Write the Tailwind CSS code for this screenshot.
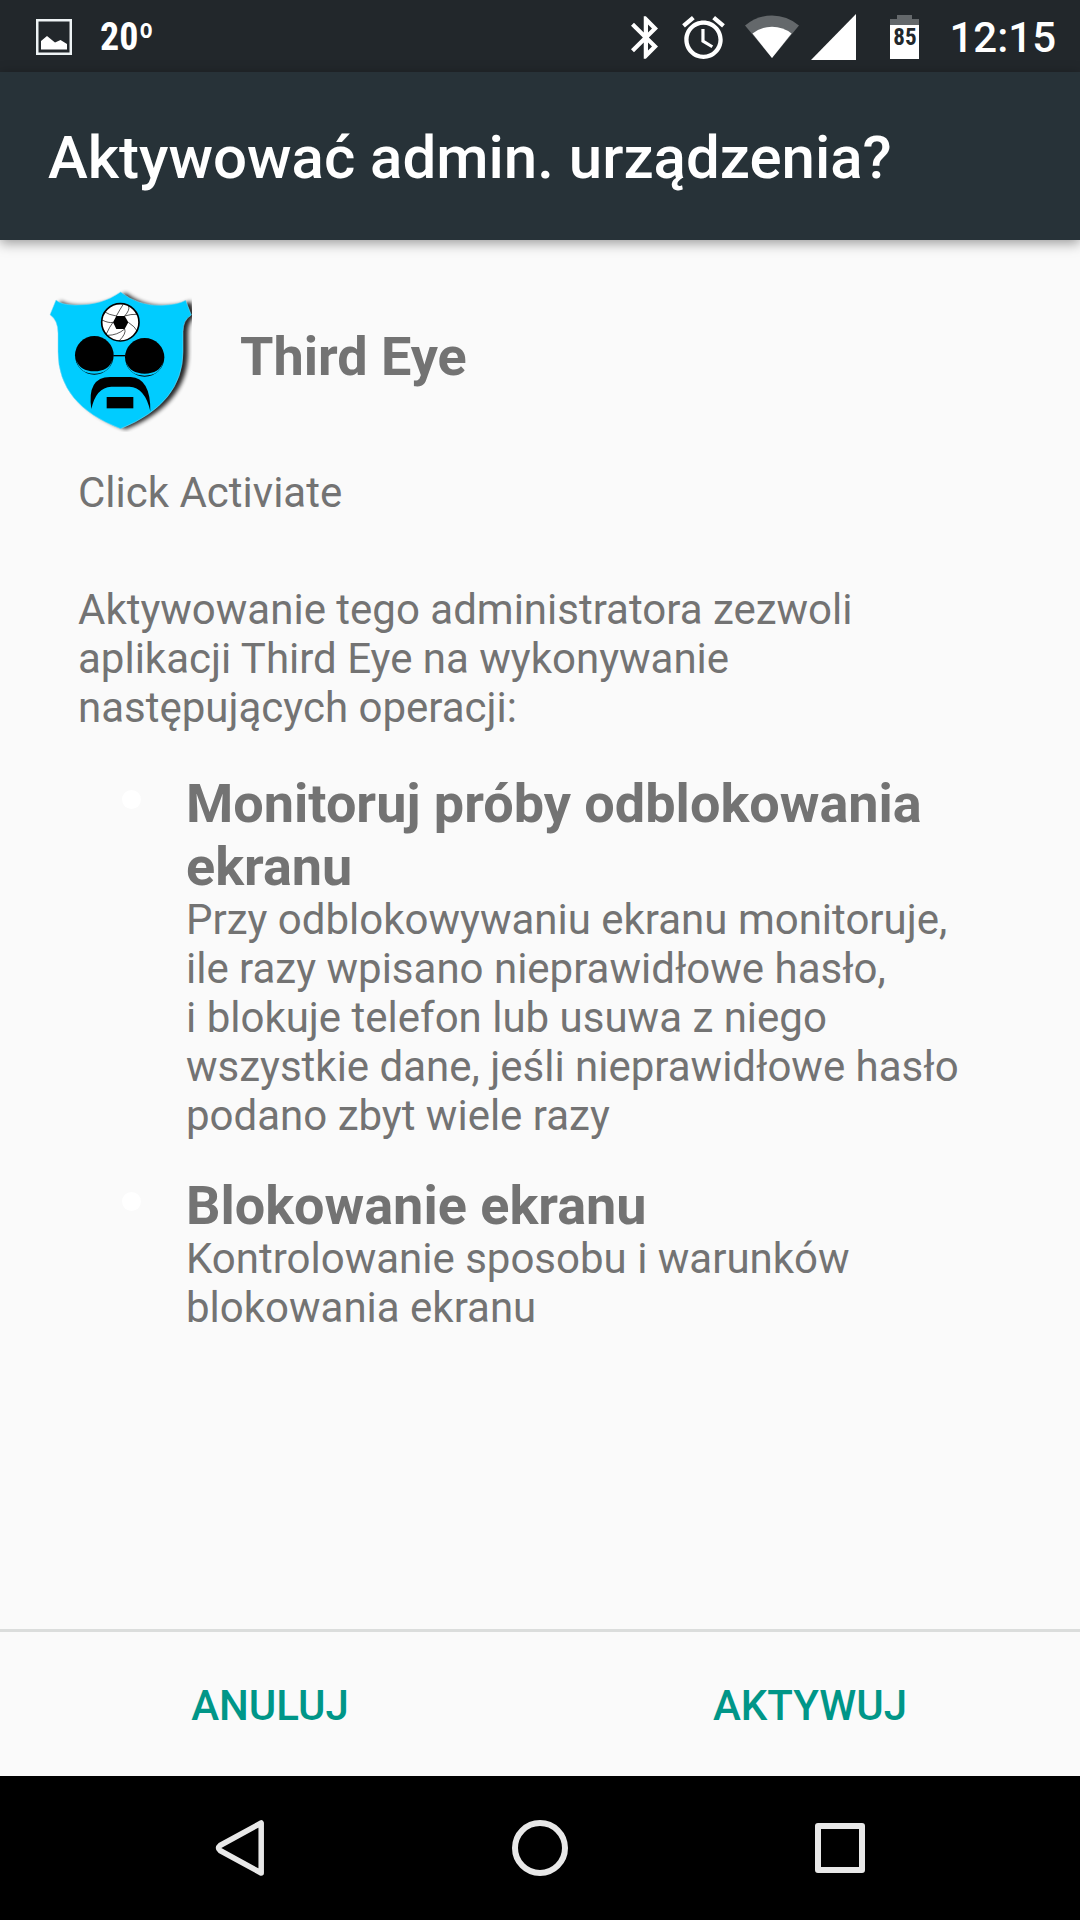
<!DOCTYPE html>
<html lang="pl">
  <head>
    <meta charset="UTF-8" />
    <meta name="viewport" content="width=device-width, initial-scale=1.0" />
    <title>Aktywować admin. urządzenia?</title>
    <script src="https://cdn.jsdelivr.net/npm/@tailwindcss/browser@4"></script>
  </head>

  <body class="min-h-screen flex flex-col bg-[#fafafa] text-[#737373] font-['Roboto',sans-serif] text-[42px] leading-[49px]">
    <!-- status bar -->
    <div class="h-18 shrink-0 flex items-center bg-[#22272b] text-white pt-0.5 pl-9 pr-6">
      <svg class="size-9" viewBox="0 0 36 36" fill="none">
        <rect x="1.25" y="1.25" width="33.5" height="33.5" stroke="#eef3f5" stroke-width="2.5" />
        <path d="M5 30.500V22l6-5 8 6.500 5.500-2.500 6.500 4v5.500z" fill="#fff" />
      </svg>
      <span class="ml-7 text-[38px] font-bold font-['Roboto_Condensed','Liberation_Sans_Narrow',sans-serif]">20º</span>

      <svg class="ml-auto w-[27px] h-[43px]" viewBox="5 2 12.71 20" fill="#fff">
        <path d="M17.71 7.71L12 2h-1v7.59L6.41 5 5 6.41 10.59 12 5 17.59 6.41 19 11 14.41V22h1l5.710-5.710-4.300-4.290 4.300-4.290zM13 5.830l1.880 1.880L13 9.590V5.830zm1.880 10.460L13 18.170v-3.760l1.880 1.880z" />
      </svg>
      <svg class="ml-6 size-[43px]" viewBox="2 1.860 20 20.140" fill="#fff">
        <path d="M22 5.720l-4.600-3.860-1.290 1.530 4.600 3.860L22 5.720zM7.880 3.390L6.600 1.860 2 5.710l1.290 1.530 4.590-3.850zM12.500 8H11v6l4.750 2.850.75-1.230-4-2.370V8zM12 4c-4.970 0-9 4.030-9 9s4.020 9 9 9c4.970 0 9-4.030 9-9s-4.030-9-9-9zm0 16c-3.870 0-7-3.130-7-7s3.130-7 7-7 7 3.130 7 7-3.130 7-7 7z" />
      </svg>
      <svg class="ml-5 w-[54px] h-[44px]" viewBox="0 0 54 44">
        <path d="M0 10.500Q12 0.500 27 0.500T54 10.500L27 43z" fill="#64686b" />
        <path d="M7.500 18.500Q16 11.800 27 11.800T46.500 18.500L27 43z" fill="#fff" />
      </svg>
      <svg class="ml-3 w-[45px] h-[46px]" viewBox="0 0 45 46"><path d="M0 46L45 0V46z" fill="#fff" /></svg>
      <div class="ml-[34px] grid place-items-center">
        <svg class="col-start-1 row-start-1 w-[29px] h-[44px]" viewBox="0 0 29 44">
          <path d="M0 10V4h7V0h15v4h7v6z" fill="#64686b" />
          <path d="M0 10h29v34H0z" fill="#fff" />
        </svg>
        <span class="col-start-1 row-start-1 pt-0.5 text-[23px] leading-6 font-bold text-[#22272b] font-['Roboto_Condensed','Liberation_Sans_Narrow',sans-serif]">85</span>
      </div>
      <span class="ml-[30px] text-[42px] font-medium">12:15</span>
    </div>

    <header class="h-42 shrink-0 flex items-center bg-[#273238] pt-1 px-12 shadow-[0_3px_12px_rgba(0,0,0,0.4)]">
      <h1 class="text-[60px] leading-[70px] font-medium text-white">Aktywować admin. urządzenia?</h1>
    </header>

    <main class="grow pt-12">
      <div class="flex items-center px-12 gap-12">
        <svg class="size-36 shrink-0" viewBox="54 54 432 432">
          <defs>
            <filter id="soft" x="-10%" y="-10%" width="125%" height="125%"><feGaussianBlur stdDeviation="6" /></filter>
            <path id="shield" d="M60 134L78 90Q92 104 135 105Q215 107 272 66Q325 108 395 106Q445 104 467 91L484 135Q459 150 459 185V245Q459 400 272 476Q84 405 84 245V190Q84 150 60 134Z" />
          </defs>
          <use href="#shield" x="15" y="2" fill="#000" opacity=".85" filter="url(#soft)" />
          <use href="#shield" fill="#00ccff" stroke="#8fdcf2" stroke-width="1.500" />
          <!-- aperture -->
          <circle cx="271" cy="157" r="56" fill="#fff" stroke="#000" stroke-width="5" />
          <path d="M249 157l10-19h25l11 19-11 20h-25z" fill="#000" />
          <path d="M259 138Q270 118 279 104M284 138Q303 132 320 133M259 138Q235 134 225 126M295 157Q315 170 322 184M284 177Q290 190 267 213M284 177Q262 196 232 196M249 157Q236 160 216 150M249 157Q240 168 228 194M284 138Q300 120 296 108" fill="none" stroke="#000" stroke-width="2" />
          <!-- glasses -->
          <ellipse cx="193" cy="256" rx="58" ry="58" fill="#000" />
          <path d="M139 270Q150 304 193 304T247 270Q238 311 193 311T139 270Z" fill="#00ccff" />
          <ellipse cx="344" cy="262" rx="59" ry="58" fill="#000" />
          <path d="M289 277Q300 311 344 311T399 277Q390 317 344 317T289 277Z" fill="#00ccff" />
          <path d="M250 257h37" stroke="#000" stroke-width="4" />
          <!-- moustache and mouth -->
          <path d="M184 417Q170 322 240 321H302Q362 324 361 424Q345 352 298 350H244Q198 352 184 417Z" fill="#000" />
          <path d="M230 381h80v34h-80z" fill="#000" />
        </svg>
        <h2 class="pb-2 text-[54px] leading-[63px] font-bold">Third Eye</h2>
      </div>

      <div class="pt-9 px-[78px]">
        <p>Click Activiate</p>
        <p class="mt-17">Aktywowanie tego administratora zezwoli aplikacji Third Eye na wykonywanie następujących operacji:</p>
      </div>

      <ul class="mt-10 pl-[122px] pr-20 flex flex-col gap-[34px]">
        <li class="flex gap-[45px]">
          <span class="mt-[18px] size-[19px] shrink-0 rounded-full bg-white"></span>
          <div>
            <h3 class="text-[54px] leading-[63px] font-bold">Monitoruj próby odblokowania ekranu</h3>
            <p class="-mt-[3px]">Przy odblokowywaniu ekranu monitoruje, ile razy wpisano nieprawidłowe hasło, i&nbsp;blokuje telefon lub usuwa z&nbsp;niego wszystkie dane, jeśli nieprawidłowe hasło podano zbyt wiele razy</p>
          </div>
        </li>
        <li class="flex gap-[45px]">
          <span class="mt-[18px] size-[19px] shrink-0 rounded-full bg-white"></span>
          <div>
            <h3 class="text-[54px] leading-[63px] font-bold">Blokowanie ekranu</h3>
            <p class="-mt-[3px]">Kontrolowanie sposobu i&nbsp;warunków blokowania ekranu</p>
          </div>
        </li>
      </ul>
    </main>

    <div class="grid grid-cols-2 border-t-3 border-[#dbdddc] text-[#009688]">
      <button type="button" class="h-36 pt-0.5 font-medium">ANULUJ</button>
      <button type="button" class="h-36 pt-0.5 font-medium">AKTYWUJ</button>
    </div>

    <!-- navigation bar -->
    <nav class="h-36 shrink-0 grid grid-cols-3 bg-black px-[90px]">
      <button type="button" aria-label="Wstecz" class="grid place-items-center">
        <svg class="size-16" viewBox="0 0 64 64" fill="none" stroke="#e8e8e8" stroke-width="5.500" stroke-linejoin="round">
          <path d="M53.200 7V57L12 34.500Q9 32 12 29.500Z" />
        </svg>
      </button>
      <button type="button" aria-label="Ekran główny" class="grid place-items-center">
        <svg class="size-16" viewBox="0 0 64 64" fill="none" stroke="#e8e8e8" stroke-width="6"><circle cx="32" cy="32" r="25" /></svg>
      </button>
      <button type="button" aria-label="Ostatnie" class="grid place-items-center">
        <svg class="size-16" viewBox="0 0 64 64" fill="none" stroke="#e8e8e8" stroke-width="6" stroke-linejoin="round"><rect x="10" y="10" width="44" height="44" /></svg>
      </button>
    </nav>
  </body>
</html>
